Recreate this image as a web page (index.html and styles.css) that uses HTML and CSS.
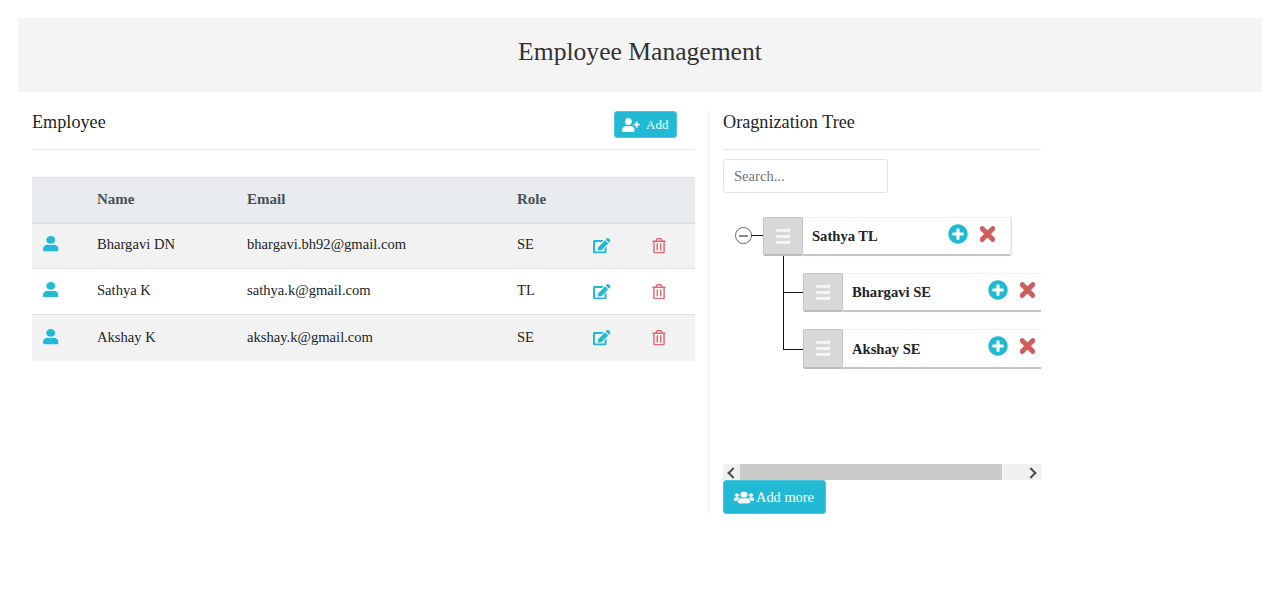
FILE: index.html
```html
<!DOCTYPE html>
<html lang="en">

<head>
    <meta charset="UTF-8">
    <title>Employee Management</title>
    <link rel="stylesheet" href="styles.css">
</head>

<body>
    <svg class="sprites" width="0" height="0">
        <symbol id="i-user" viewBox="0 0 448 512" preserveAspectRatio="none"><path d="M224 256c70.7 0 128-57.3 128-128S294.7 0 224 0 96 57.3 96 128s57.3 128 128 128zm89.6 32h-16.7c-22.2 10.2-46.9 16-72.9 16s-50.6-5.8-72.9-16h-16.7C60.2 288 0 348.2 0 422.4V464c0 26.5 21.5 48 48 48h352c26.5 0 48-21.5 48-48v-41.6c0-74.2-60.2-134.4-134.4-134.4z"/></symbol>
        <symbol id="i-user-plus" viewBox="0 0 640 512"><path d="M624 208h-64v-64c0-8.8-7.2-16-16-16h-32c-8.8 0-16 7.2-16 16v64h-64c-8.8 0-16 7.2-16 16v32c0 8.8 7.2 16 16 16h64v64c0 8.8 7.2 16 16 16h32c8.8 0 16-7.2 16-16v-64h64c8.8 0 16-7.2 16-16v-32c0-8.8-7.2-16-16-16zm-400 48c70.7 0 128-57.3 128-128S294.7 0 224 0 96 57.3 96 128s57.3 128 128 128zm89.6 32h-16.7c-22.2 10.2-46.9 16-72.9 16s-50.6-5.8-72.9-16h-16.7C60.2 288 0 348.2 0 422.4V464c0 26.5 21.5 48 48 48h352c26.5 0 48-21.5 48-48v-41.6c0-74.2-60.2-134.4-134.4-134.4z"/></symbol>
        <symbol id="i-edit" viewBox="0 0 576 512"><path d="M402.6 83.2l90.2 90.2c3.8 3.8 3.8 10 0 13.8L274.4 405.6l-92.8 10.3c-12.4 1.4-22.9-9.1-21.5-21.5l10.3-92.8L388.8 83.2c3.8-3.8 10-3.8 13.8 0zm162-22.9l-48.8-48.8c-15.2-15.2-39.9-15.2-55.2 0l-35.4 35.4c-3.8 3.8-3.8 10 0 13.8l90.2 90.2c3.8 3.8 10 3.8 13.8 0l35.4-35.4c15.2-15.3 15.2-40 0-55.2zM384 346.2V448H64V128h229.8c3.2 0 6.2-1.3 8.5-3.5l40-40c7.6-7.6 2.2-20.5-8.5-20.5H48C21.5 64 0 85.5 0 112v352c0 26.5 21.5 48 48 48h352c26.5 0 48-21.5 48-48V306.2c0-10.7-12.9-16-20.5-8.5l-40 40c-2.2 2.3-3.5 5.3-3.5 8.5z"/></symbol>
        <symbol id="i-trash" viewBox="0 0 448 512"><path d="M268 416h24a12 12 0 0 0 12-12V188a12 12 0 0 0-12-12h-24a12 12 0 0 0-12 12v216a12 12 0 0 0 12 12zM432 80h-82.41l-34-56.7A48 48 0 0 0 274.41 0H173.59a48 48 0 0 0-41.16 23.3L98.41 80H16A16 16 0 0 0 0 96v16a16 16 0 0 0 16 16h16v336a48 48 0 0 0 48 48h288a48 48 0 0 0 48-48V128h16a16 16 0 0 0 16-16V96a16 16 0 0 0-16-16zM171.84 50.91A6 6 0 0 1 177 48h94a6 6 0 0 1 5.15 2.91L293.61 80H154.39zM368 464H80V128h288zm-212-48h24a12 12 0 0 0 12-12V188a12 12 0 0 0-12-12h-24a12 12 0 0 0-12 12v216a12 12 0 0 0 12 12z"/></symbol>
        <symbol id="i-users" viewBox="0 0 640 512" preserveAspectRatio="none"><path d="M96 224c35.3 0 64-28.7 64-64s-28.7-64-64-64-64 28.7-64 64 28.7 64 64 64zm448 0c35.3 0 64-28.7 64-64s-28.7-64-64-64-64 28.7-64 64 28.7 64 64 64zm32 32h-64c-17.6 0-33.5 7.1-45.1 18.6 40.3 22.1 68.9 62 75.1 109.4h66c17.7 0 32-14.3 32-32v-32c0-35.3-28.7-64-64-64zm-256 0c61.9 0 112-50.1 112-112S381.9 32 320 32 208 82.1 208 144s50.1 112 112 112zm76.8 32h-8.3c-20.8 10-43.9 16-68.5 16s-47.6-6-68.5-16h-8.3C179.6 288 128 339.6 128 403.2V432c0 26.5 21.5 48 48 48h288c26.5 0 48-21.5 48-48v-28.8c0-63.6-51.6-115.2-115.2-115.2zm-223.7-13.4C161.5 263.1 145.6 256 128 256H64c-35.3 0-64 28.7-64 64v32c0 17.7 14.3 32 32 32h65.9c6.3-47.4 34.9-87.3 75.2-109.4z"/></symbol>
        <symbol id="i-plus" viewBox="0 0 512 512"><path d="M256 8C119 8 8 119 8 256s111 248 248 248 248-111 248-248S393 8 256 8zm144 276c0 6.6-5.4 12-12 12h-92v92c0 6.6-5.4 12-12 12h-56c-6.6 0-12-5.4-12-12v-92h-92c-6.6 0-12-5.4-12-12v-56c0-6.6 5.4-12 12-12h92v-92c0-6.6 5.4-12 12-12h56c6.6 0 12 5.4 12 12v92h92c6.6 0 12 5.4 12 12v56z"/></symbol>
        <symbol id="i-times" viewBox="0 0 352 512"><path d="M242.72 256l100.07-100.07c12.28-12.28 12.28-32.19 0-44.48l-22.24-22.24c-12.28-12.28-32.19-12.28-44.48 0L176 189.28 75.93 89.21c-12.28-12.28-32.19-12.28-44.48 0L9.21 111.45c-12.28 12.28-12.28 32.19 0 44.48L109.28 256 9.21 356.07c-12.28 12.28-12.28 32.19 0 44.48l22.24 22.24c12.28 12.28 32.2 12.28 44.48 0L176 322.72l100.07 100.07c12.28 12.28 32.2 12.28 44.48 0l22.24-22.24c12.28-12.28 12.28-32.19 0-44.48L242.72 256z"/></symbol>
    </svg>

    <header class="page_title">Employee Management</header>

    <main class="columns">
        <section class="employees">
            <div class="section_head">
                <h2>Employee</h2>
                <button class="btn btn_add"><svg class="ic_add"><use href="#i-user-plus"/></svg>Add</button>
            </div>
            <table>
                <thead>
                    <tr>
                        <th class="c_icon"></th>
                        <th class="c_name">Name</th>
                        <th class="c_email">Email</th>
                        <th class="c_role">Role</th>
                        <th class="c_edit"></th>
                        <th></th>
                    </tr>
                </thead>
                <tbody>
                    <tr>
                        <td><svg class="ic_user"><use href="#i-user"/></svg></td>
                        <td>Bhargavi DN</td>
                        <td>bhargavi.bh92@gmail.com</td>
                        <td>SE</td>
                        <td><svg class="ic_edit"><use href="#i-edit"/></svg></td>
                        <td><svg class="ic_trash"><use href="#i-trash"/></svg></td>
                    </tr>
                    <tr>
                        <td><svg class="ic_user"><use href="#i-user"/></svg></td>
                        <td>Sathya K</td>
                        <td>sathya.k@gmail.com</td>
                        <td>TL</td>
                        <td><svg class="ic_edit"><use href="#i-edit"/></svg></td>
                        <td><svg class="ic_trash"><use href="#i-trash"/></svg></td>
                    </tr>
                    <tr>
                        <td><svg class="ic_user"><use href="#i-user"/></svg></td>
                        <td>Akshay K</td>
                        <td>akshay.k@gmail.com</td>
                        <td>SE</td>
                        <td><svg class="ic_edit"><use href="#i-edit"/></svg></td>
                        <td><svg class="ic_trash"><use href="#i-trash"/></svg></td>
                    </tr>
                </tbody>
            </table>
        </section>

        <section class="org">
            <div class="section_head">
                <h2>Oragnization Tree</h2>
            </div>
            <input class="search" type="text" placeholder="Search...">
            <div class="tree">
                <div class="node root">
                    <span class="toggle"></span>
                    <div class="handle"><i></i><i></i><i></i></div>
                    <div class="card">
                        <b>Sathya TL</b>
                        <svg class="ic_plus"><use href="#i-plus"/></svg>
                        <svg class="ic_times"><use href="#i-times"/></svg>
                    </div>
                </div>
                <div class="node child">
                    <div class="handle"><i></i><i></i><i></i></div>
                    <div class="card">
                        <b>Bhargavi SE</b>
                        <svg class="ic_plus"><use href="#i-plus"/></svg>
                        <svg class="ic_times"><use href="#i-times"/></svg>
                    </div>
                </div>
                <div class="node child">
                    <div class="handle"><i></i><i></i><i></i></div>
                    <div class="card">
                        <b>Akshay SE</b>
                        <svg class="ic_plus"><use href="#i-plus"/></svg>
                        <svg class="ic_times"><use href="#i-times"/></svg>
                    </div>
                </div>
            </div>
            <div class="scrollbar">
                <span class="arrow arrow_l"></span>
                <span class="thumb"></span>
                <span class="arrow arrow_r"></span>
            </div>
            <button class="btn btn_more"><svg class="ic_users"><use href="#i-users"/></svg>Add more</button>
        </section>
    </main>
</body>

</html>
```

FILE: styles.css
```css
* {
    box-sizing: border-box;
}

body {
    margin: 0;
    padding: 18px;
    font-family: "Liberation Serif", "Times New Roman", serif;
    font-size: 14.6px;
    color: #212529;
    background: #fff;
}

svg {
    fill: currentColor;
}

.sprites {
    display: block;
    height: 0;
}

.page_title {
    height: 74px;
    line-height: 68px;
    text-align: center;
    font-size: 25.6px;
    color: #333;
    background: #f4f4f4;
}

.columns {
    display: flex;
    margin-top: 19px;
    padding-left: 14px;
}

.employees {
    width: 663px;
}

.org {
    width: 333px;
    margin-left: 13px;
    padding-left: 14px;
    border-left: 1px solid #eee;
}

.section_head {
    display: flex;
    justify-content: space-between;
    height: 39px;
    padding-right: 18px;
    border-bottom: 1px solid #eaeaea;
}

.section_head h2 {
    margin: 0;
    font-size: 18.2px;
    font-weight: 400;
    line-height: 23px;
}

.btn {
    display: inline-flex;
    align-items: center;
    border: 1px solid #4ac7dc;
    border-radius: 3px;
    color: #fff;
    background: #21b9d3;
    font-family: inherit;
}

.btn_add {
    width: 63px;
    height: 27px;
    padding: 0 0 0 7px;
    font-size: 13px;
}

.ic_add {
    width: 18px;
    height: 14px;
    margin-right: 6px;
}

.btn_more {
    width: 103px;
    height: 34px;
    padding: 0 0 0 10px;
    font-size: 14.4px;
}

.ic_users {
    width: 20px;
    height: 13px;
    margin-right: 2px;
    stroke: currentColor;
    stroke-width: 12px;
}

table {
    width: 663px;
    margin-top: 27px;
    border-collapse: collapse;
    table-layout: fixed;
}

thead tr {
    height: 45px;
    background: #e9ecef;
    border-top: 1px solid #dee2e6;
    border-bottom: 2px solid #dee2e6;
}

th {
    text-align: left;
    font-size: 15px;
    font-weight: 700;
    color: #495057;
}

tbody tr {
    height: 46px;
    border-bottom: 1px solid #dee2e6;
}

tbody tr:nth-child(odd) {
    background: #f2f2f2;
}

tbody tr:last-child {
    border-bottom: 0;
}

td,
th {
    padding: 0 0 0 10px;
}

td {
    padding-bottom: 2px;
}

tbody tr:last-child td:nth-child(-n+4) {
    padding-bottom: 0;
}

th.c_name,
td:nth-child(2),
th.c_email,
td:nth-child(3),
th.c_role,
td:nth-child(4) {
    padding-left: 0;
}

.c_icon {
    width: 65px;
}

.c_name {
    width: 150px;
}

.c_email {
    width: 270px;
}

.c_role {
    width: 66px;
}

.c_edit {
    width: 59px;
}

td svg {
    display: block;
}

.ic_user {
    width: 15.5px;
    height: 15.5px;
    margin-left: 1px;
    margin-bottom: 2px;
    color: #21b9d3;
}

.ic_edit {
    width: 17.5px;
    height: 15.5px;
    margin-top: 2px;
    color: #21b9d3;
}

.ic_trash {
    width: 14px;
    height: 15.5px;
    margin-top: 2px;
    color: #dc6a75;
}

.search {
    display: block;
    width: 165px;
    height: 34px;
    margin-top: 9px;
    padding: 0 10px;
    border: 1px solid #e3e3e3;
    border-radius: 3px;
    font-family: inherit;
    font-size: 14.6px;
}

.search::placeholder {
    color: #6c757d;
}

.tree {
    position: relative;
    width: 318px;
    height: 271px;
    padding-top: 24px;
    overflow: hidden;
}

.node {
    position: relative;
    display: flex;
    width: 249px;
    height: 39px;
}

.root {
    margin-left: 40px;
}

.child {
    margin-left: 80px;
    margin-top: 17px;
}

.child:last-child {
    height: 40px;
}

.child:last-child b {
    margin-top: 2px;
}

.toggle {
    position: absolute;
    left: -28px;
    top: 10px;
    width: 17px;
    height: 17px;
    border: 1px solid #666;
    border-radius: 50%;
    background: linear-gradient(#888, #888) center / 9px 2px no-repeat #fff;
}

/* short line from the toggle to the handle */
.toggle::after {
    content: "";
    position: absolute;
    left: 15px;
    top: 7px;
    width: 12px;
    height: 1px;
    background: #111;
}

.root::after {
    content: "";
    position: absolute;
    left: 20px;
    top: 39px;
    width: 1px;
    height: 94px;
    background: #111;
}

.child::before {
    content: "";
    position: absolute;
    left: -20px;
    top: 19px;
    width: 20px;
    height: 1px;
    background: #111;
}

.child:last-child::before {
    top: 20px;
}

.handle {
    display: flex;
    flex-direction: column;
    flex: none;
    justify-content: center;
    align-items: center;
    gap: 3px;
    width: 40px;
    height: 100%;
    background: #d8d8d8;
    border: 1px solid #c8c8c8;
    border-bottom: 2px solid #bbb;
    border-radius: 2px;
}

.handle i {
    width: 14px;
    height: 3px;
    background: #f4f4f4;
}

.card {
    display: flex;
    align-items: center;
    flex: none;
    width: 208px;
    height: 100%;
    padding-left: 9px;
    background: #fff;
    border: 1px solid #f0f0f0;
    border-left: 0;
    border-bottom: 2px solid #c4c4c4;
    border-radius: 0 2px 2px 0;
    box-shadow: 1px 0 1px #ddd;
}

.card b {
    width: 136px;
    font-size: 14.6px;
    color: #212529;
}

.ic_plus {
    width: 20px;
    height: 20px;
    margin-bottom: 5px;
    color: #21b9d3;
}

.ic_times {
    width: 15px;
    height: 22px;
    margin-left: 12px;
    margin-bottom: 5px;
    color: #cd5c5c;
    stroke: currentColor;
    stroke-width: 24px;
}

.scrollbar {
    display: flex;
    width: 318px;
    height: 16px;
    background: #f0f0f0;
}

.thumb {
    width: 262px;
    background: #cacaca;
}

.arrow {
    position: relative;
    width: 17px;
}

.arrow_r {
    margin-left: auto;
}

.arrow::after {
    content: "";
    position: absolute;
    top: 5px;
    width: 6px;
    height: 6px;
    border-top: 2px solid #505050;
    border-right: 2px solid #505050;
}

.arrow_l::after {
    left: 6px;
    transform: rotate(-135deg);
}

.arrow_r::after {
    left: 3px;
    transform: rotate(45deg);
}
```
